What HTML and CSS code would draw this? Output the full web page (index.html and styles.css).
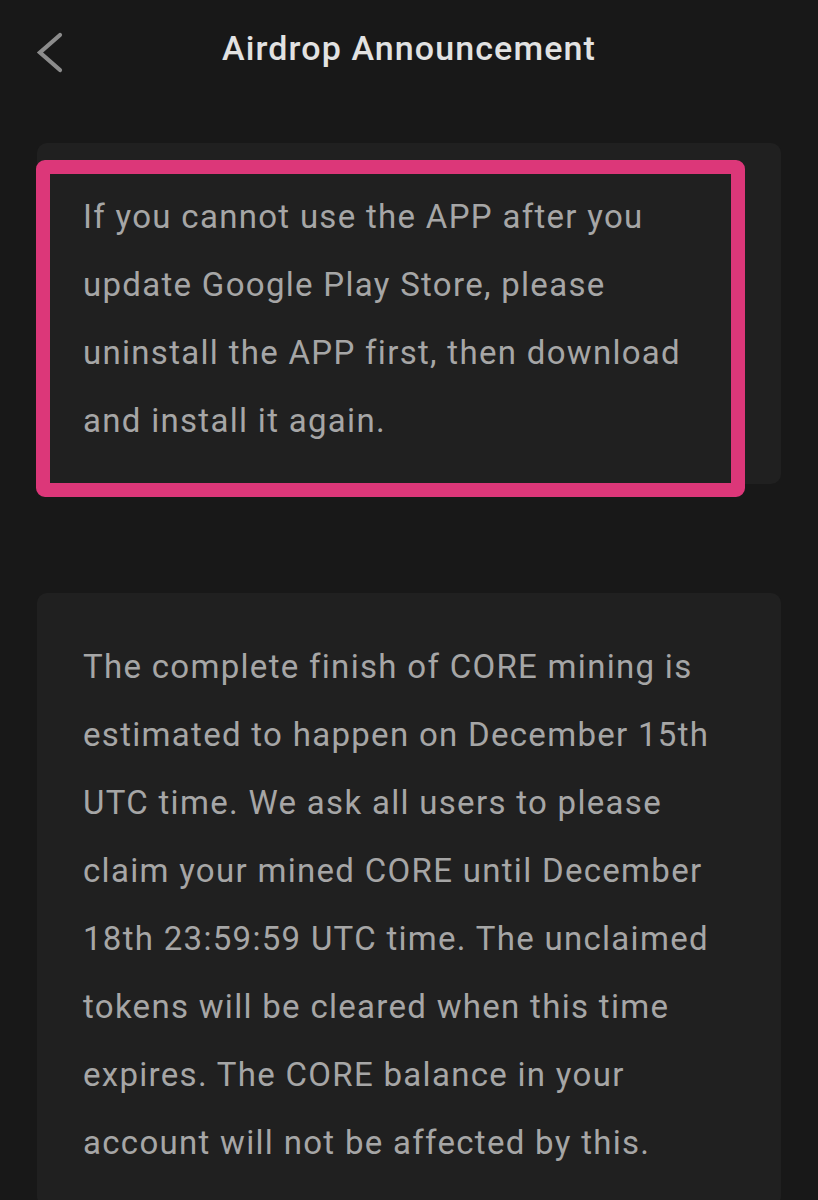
FILE: index.html
```html
<!DOCTYPE html>
<html lang="en">
<head>
<meta charset="utf-8">
<title>Airdrop Announcement</title>
<link rel="stylesheet" href="styles.css">
</head>
<body>
<div class="screen">
  <header class="topbar">
    <svg class="back" width="30" height="44" viewBox="0 0 30 44" aria-hidden="true">
      <path d="M24 5 L4 22.5 L24 40" fill="none" stroke="#8c8c8c" stroke-width="4.2" stroke-linecap="round" stroke-linejoin="miter"/>
    </svg>
    <h1 class="title">Airdrop Announcement</h1>
  </header>
  <main class="list">
    <section class="card card-marked">
      <p class="text">If you cannot use the APP after you<br>update Google Play Store, please<br>uninstall the APP first, then download<br>and install it again.</p>
      <div class="mark"></div>
    </section>
    <section class="card">
      <p class="text">The complete finish of CORE mining is<br>estimated to happen on December 15th<br>UTC time. We ask all users to please<br>claim your mined CORE until December<br>18th 23:59:59 UTC time. The unclaimed<br>tokens will be cleared when this time<br>expires. The CORE balance in your<br>account will not be affected by this.</p>
    </section>
  </main>
</div>
</body>
</html>
```

FILE: styles.css
```css
html, body {
  margin: 0;
  padding: 0;
  background: #181818;
}
body {
  font-family: Roboto, "Noto Sans", "Liberation Sans", sans-serif;
  height: 1200px;
  overflow: hidden;
}
.screen {
  width: 818px;
  min-height: 1200px;
  background: #181818;
}
.topbar {
  position: relative;
  height: 104px;
  display: flex;
  align-items: center;
  justify-content: center;
}
.back {
  position: absolute;
  left: 36px;
  top: 30px;
}
.title {
  margin: 0;
  margin-top: -8px;
  font-size: 34px;
  font-weight: 500;
  color: #e2e2e2;
  letter-spacing: 1.1px;
}
.list {
  padding: 39px 37px 0 37px;
  display: flex;
  flex-direction: column;
  gap: 109px;
}
.card {
  position: relative;
  background: #202020;
  border-radius: 10px;
  padding: 40px 40px 29px 46px;
}
.text {
  margin: 0;
  font-size: 33px;
  line-height: 68px;
  color: #a6a6a6;
  letter-spacing: 1.3px;
  white-space: nowrap;
}
.mark {
  position: absolute;
  left: -1px;
  top: 17px;
  width: 709px;
  height: 337px;
  box-sizing: border-box;
  border: 14px solid #dc3779;
  border-radius: 9px;
}
```
